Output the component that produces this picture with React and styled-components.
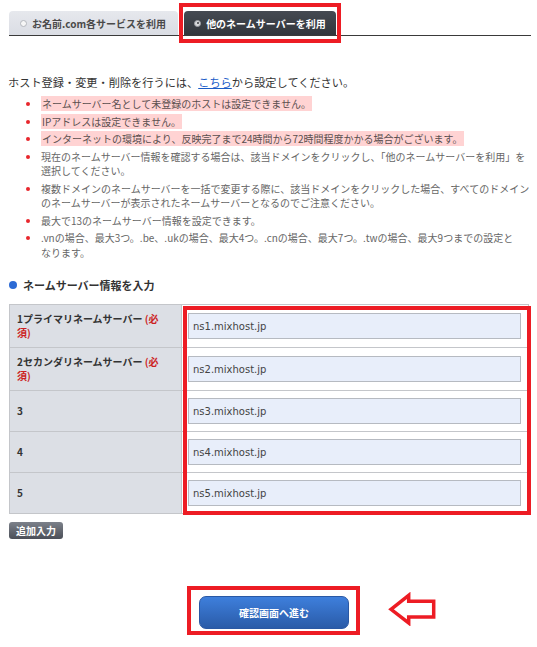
import styled, { createGlobalStyle, css } from 'styled-components';

const RED = '#ed1c24';

const notes = [
	{ text: 'ネームサーバー名として未登録のホストは設定できません。', warn: true },
	{ text: 'IPアドレスは設定できません。', warn: true },
	{ text: 'インターネットの環境により、反映完了まで24時間から72時間程度かかる場合がございます。', warn: true },
	{ text: '現在のネームサーバー情報を確認する場合は、該当ドメインをクリックし、「他のネームサーバーを利用」を選択してください。' },
	{ text: '複数ドメインのネームサーバーを一括で変更する際に、該当ドメインをクリックした場合、すべてのドメインのネームサーバーが表示されたネームサーバーとなるのでご注意ください。' },
	{ text: '最大で13のネームサーバー情報を設定できます。' },
	{ text: '.vnの場合、最大3つ。.be、.ukの場合、最大4つ。.cnの場合、最大7つ。.twの場合、最大9つまでの設定と', rest: 'なります。' },
];

const servers = [
	{ label: '1プライマリネームサーバー', required: true, value: 'ns1.mixhost.jp' },
	{ label: '2セカンダリネームサーバー', required: true, value: 'ns2.mixhost.jp' },
	{ label: '3', value: 'ns3.mixhost.jp' },
	{ label: '4', value: 'ns4.mixhost.jp' },
	{ label: '5', value: 'ns5.mixhost.jp' },
];

export default function App() {
	return (
		<Page>
			<GlobalStyle />
			<TabBar>
				<Tab>
					<Radio />
					お名前.com各サービスを利用
				</Tab>
				<Tab $active>
					<Radio $checked />
					他のネームサーバーを利用
				</Tab>
			</TabBar>

			<Intro>
				ホスト登録・変更・削除を行うには、<IntroLink href="#">こちら</IntroLink>から設定してください。
			</Intro>

			<Notes>
				{notes.map((note) => (
					<Note key={note.text}>
						{note.warn ? <Warn>{note.text}</Warn> : note.text}
						{note.rest && <><br />{note.rest}</>}
					</Note>
				))}
			</Notes>

			<SectionTitle>
				<Dot />
				ネームサーバー情報を入力
			</SectionTitle>

			<TableFrame>
				<ServerTable>
					<tbody>
						{servers.map((row) => (
							<tr key={row.value}>
								<Label>
									{row.label}
									{row.required && <Required> (必須)</Required>}
								</Label>
								<Field>
									<Input defaultValue={row.value} />
								</Field>
							</tr>
						))}
					</tbody>
				</ServerTable>
				<Marker />
			</TableFrame>

			<AddButton type="button">追加入力</AddButton>

			<SubmitRow>
				<SubmitWrap>
					<SubmitButton type="button">確認画面へ進む</SubmitButton>
				</SubmitWrap>
				<Arrow width="50" height="34" viewBox="0 0 50 34">
					<polygon
						points="4,17.3 21.7,3.3 21.7,9.3 46.7,9.3 46.7,25 21.7,25 21.7,31"
						fill="#fff"
						stroke={RED}
						strokeWidth="3.5"
						strokeLinejoin="miter"
					/>
				</Arrow>
			</SubmitRow>
		</Page>
	);
}

const GlobalStyle = createGlobalStyle`
	body {
		margin: 0;
		background: #fff;
		color: #333;
		font-family: "Noto Sans CJK JP", "Noto Sans", sans-serif;
	}
`;

const Page = styled.div`
	width: 537px;
	box-sizing: border-box;
	padding: 11px 5px 20px 8px;
`;

const TabBar = styled.div`
	display: flex;
	gap: 6px;
	margin: 0 1px;
	border-bottom: 1px solid #3a3a3a;
`;

const Tab = styled.div`
	position: relative;
	display: flex;
	align-items: center;
	gap: 5px;
	height: 24px;
	padding: 0 12px 0 11px;
	border-radius: 4px 4px 0 0;
	font-size: 10px;
	font-weight: bold;
	color: #4a4a4a;
	background: linear-gradient(#e6e8ed, #dadde4);

	${({ $active }) => $active && css`
		padding: 0 10px 0 10px;
		color: #fff;
		background: linear-gradient(#454a52, #32363c);

		&::after {
			content: '';
			position: absolute;
			inset: -8px -5px;
			border: 4px solid ${RED};
			pointer-events: none;
		}
	`}
`;

const Radio = styled.span`
	position: relative;
	width: 7px;
	height: 7px;
	box-sizing: border-box;
	border-radius: 50%;
	border: 1px solid #b4b7bd;
	background: #f6f6f6;

	${({ $checked }) => $checked && css`
		border-color: #9a9da3;
		background: #d9dadc;

		&::after {
			content: '';
			position: absolute;
			inset: 1.5px;
			border-radius: 50%;
			background: #3a3d42;
		}
	`}
`;

const Intro = styled.p`
	margin: 38px 0 0;
	font-size: 11.2px;
	line-height: 16px;
	color: #333;
`;

const IntroLink = styled.a`
	color: #1a5cc8;
	text-decoration: underline;
`;

const Notes = styled.ul`
	margin: 7px 0 0;
	padding: 0 0 0 33px;
`;

const Note = styled.li`
	font-size: 10px;
	line-height: 14.5px;
	color: #666;
	margin-bottom: 3px;

	&::marker {
		color: #e8262c;
	}

	&:last-child {
		margin-bottom: 0;
	}
`;

const Warn = styled.span`
	background: #ffd3d3;
	color: #5a4f4f;
	padding: 0 1px;
`;

const SectionTitle = styled.h3`
	display: flex;
	align-items: center;
	gap: 6px;
	margin: 17px 0 0 1px;
	font-size: 11px;
	line-height: 16px;
	font-weight: bold;
	color: #333;
`;

const Dot = styled.span`
	width: 8px;
	height: 8px;
	border-radius: 50%;
	background: #2c6ad4;
`;

const TableFrame = styled.div`
	position: relative;
	width: 520px;
	margin: 11px 0 0 1px;
`;

const ServerTable = styled.table`
	width: 100%;
	border-collapse: collapse;
	border: 1px solid #c4c6ca;
`;

const Label = styled.th`
	width: 144px;
	padding: 6.5px 20px 6.5px 7px;
	border: 1px solid #c4c6ca;
	background: #dcdfe5;
	text-align: left;
	vertical-align: middle;
	font-size: 10px;
	line-height: 14.5px;
	font-weight: bold;
	color: #333;
`;

const Required = styled.span`
	color: #cc1f1f;
`;

const Field = styled.td`
	padding: 7px 7px 7px 6px;
	border: 1px solid #c4c6ca;
	vertical-align: middle;
	background: #fff;
`;

const Input = styled.input`
	display: block;
	width: 100%;
	height: 26px;
	box-sizing: border-box;
	margin: 0;
	padding: 0 4px;
	border: 1px solid #b6bac1;
	background: #e8eefa;
	font-family: "DejaVu Sans", Verdana, sans-serif;
	font-size: 10px;
	color: #444;
	outline: none;
`;

const Marker = styled.div`
	position: absolute;
	top: 2px;
	left: 174px;
	right: -2px;
	bottom: -1px;
	border: 4px solid ${RED};
	pointer-events: none;
`;

const AddButton = styled.button`
	display: block;
	margin: 8px 0 0 1px;
	height: 17px;
	padding: 0 7px;
	border: none;
	border-radius: 3px;
	background: linear-gradient(#7c818a, #4b4f58);
	font-family: inherit;
	font-size: 10px;
	line-height: 17px;
	font-weight: bold;
	color: #fff;
`;

const SubmitRow = styled.div`
	display: flex;
	align-items: flex-start;
	margin: 57px 0 0 191px;
`;

const SubmitWrap = styled.div`
	position: relative;

	&::after {
		content: '';
		position: absolute;
		top: -10px;
		left: -12px;
		right: -11px;
		bottom: -6px;
		border: 4px solid ${RED};
		pointer-events: none;
	}
`;

const SubmitButton = styled.button`
	display: block;
	width: 150px;
	height: 33px;
	border: 1px solid #2a58a4;
	border-radius: 7px;
	background: linear-gradient(#3e7fdc, #2a5ba8);
	font-family: inherit;
	font-size: 10px;
	font-weight: bold;
	color: #fff;
`;

const Arrow = styled.svg`
	display: block;
	margin: -4px 0 0 38px;
`;
